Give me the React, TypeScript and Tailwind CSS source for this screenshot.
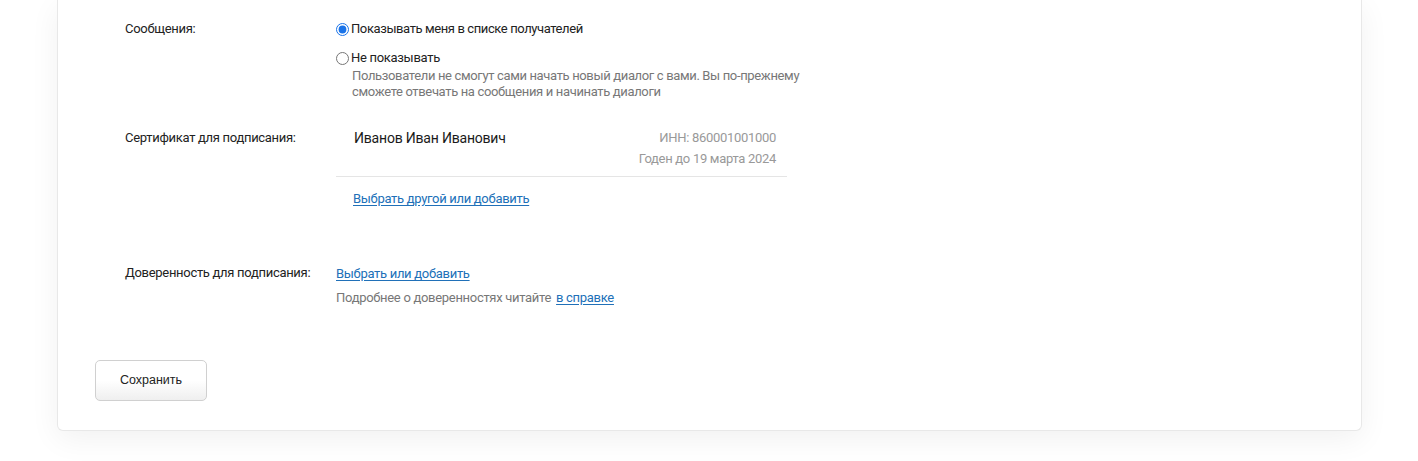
import { useState } from "react";

const font = { fontFamily: "Roboto, 'Noto Sans', sans-serif" };

function Row({
  label,
  children,
  className = "",
}: {
  label: string;
  children: React.ReactNode;
  className?: string;
}) {
  return (
    <div className={`flex ${className}`}>
      <div className="w-[211px] shrink-0 text-[13px] tracking-[-0.3px] text-[#222]">{label}</div>
      <div className="flex-1">{children}</div>
    </div>
  );
}

export default function App() {
  const [show, setShow] = useState(true);

  return (
    <div className="min-h-[461px] bg-white pb-[30px]" style={font}>
      <div className="mx-[57px] w-[1305px] rounded-b-[6px] border border-t-0 border-[#e8e8e8] bg-white shadow-[0_8px_30px_rgba(0,0,0,0.06)] pb-[29px]">
        <div className="pl-[67px] pt-[20px] tracking-[-0.3px]">
          <Row label="Сообщения:" className="leading-[18px]">
            <label className="flex items-center gap-[2px] text-[13px] tracking-[-0.4px] text-[#222]">
              <input
                type="radio"
                name="msg"
                checked={show}
                onChange={() => setShow(true)}
                className="m-0 h-[13px] w-[13px] accent-[#1a73e8]"
              />
              Показывать меня в списке получателей
            </label>
            <label className="mt-[11px] flex items-center gap-[2px] text-[13px] text-[#222]">
              <input
                type="radio"
                name="msg"
                checked={!show}
                onChange={() => setShow(false)}
                className="m-0 h-[13px] w-[13px] accent-[#1a73e8]"
              />
              Не показывать
            </label>
            <p className="mt-[1px] w-[470px] pl-[16px] text-[13px] leading-[16px] tracking-[-0.35px] text-[#777]">
              Пользователи не смогут сами начать новый диалог с вами. Вы по-прежнему
              сможете отвечать на сообщения и начинать диалоги
            </p>
          </Row>

          <Row label="Сертификат для подписания:" className="mt-[29px] leading-[18px]">
            <div className="w-[451px]">
              <div className="flex justify-between border-b border-[#e5e5e5] pb-[7px] pl-[18px] pr-[11px]">
                <div className="text-[14px] tracking-[-0.2px] text-[#1a1a1a]">Иванов Иван Иванович</div>
                <div className="text-right text-[13px] leading-[21px] text-[#999]">
                  <div className="-mt-[2px]">ИНН: 860001001000</div>
                  <div>Годен до 19 марта 2024</div>
                </div>
              </div>
              <a href="#" className="mt-[13px] ml-[17px] inline-block text-[13px] text-[#2070b8] underline underline-offset-2">
                Выбрать другой или добавить
              </a>
            </div>
          </Row>

          <Row label="Доверенность для подписания:" className="mt-[56px] leading-[18px]">
            <a href="#" className="text-[13px] text-[#2070b8] underline underline-offset-2">
              Выбрать или добавить
            </a>
            <div className="mt-[6px] text-[13px] text-[#777]">
              Подробнее о доверенностях читайте{" "}
              <a href="#" className="ml-[2px] text-[#2070b8] underline underline-offset-2">
                в справке
              </a>
            </div>
          </Row>
        </div>

        <div className="mt-[53px] pl-[37px]">
          <button
            type="button"
            className="h-[41px] w-[112px] rounded-[5px] border border-[#d0d0d0] bg-gradient-to-b from-white from-50% to-[#efefef] text-[12.5px] text-[#222]"
            style={{ fontFamily: "Arial, 'Liberation Sans', sans-serif" }}
          >
            Сохранить
          </button>
        </div>
      </div>
    </div>
  );
}
